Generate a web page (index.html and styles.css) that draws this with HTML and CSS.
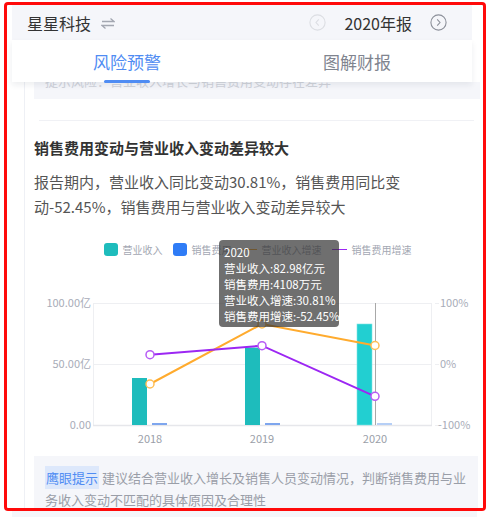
FILE: index.html
```html
<!DOCTYPE html>
<html lang="zh-CN">
<head>
<meta charset="utf-8">
<link rel="stylesheet" href="styles.css">
</head>
<body>
<div class="frame">
  <div class="header">
    <div class="company">
      <span class="name">星星科技</span>
      <svg class="swap" width="14" height="12" viewBox="0 0 14 12"><path d="M1 4.5h12L9.5 1.5M13 8.5H1l3.5 3" fill="none" stroke="#a3a7b1" stroke-width="1.3"/></svg>
    </div>
    <div class="period">
      <svg class="circ" width="17" height="17" viewBox="0 0 17 17"><circle cx="8.5" cy="8.5" r="7.6" fill="none" stroke="#dcdee3" stroke-width="1.1"/><path d="M9.8 5.4L7 8.5l2.8 3.1" fill="none" stroke="#dcdee3" stroke-width="1.1"/></svg>
      <span class="year">2020年报</span>
      <svg class="circ" width="17" height="17" viewBox="0 0 17 17"><circle cx="8.5" cy="8.5" r="7.6" fill="none" stroke="#8c909a" stroke-width="1.1"/><path d="M7.2 5.4L10 8.5l-2.8 3.1" fill="none" stroke="#8c909a" stroke-width="1.1"/></svg>
    </div>
  </div>
  <div class="tabs">
    <div class="tab active">风险预警<span class="bar"></span></div>
    <div class="tab">图解财报</div>
  </div>
  <div class="card">
    <div class="prev"><span>提示风险：营业收入增长与销售费用变动存在差异</span></div>
    <div class="divider"></div>
    <h2 class="title">销售费用变动与营业收入变动差异较大</h2>
    <p class="desc">报告期内，营业收入同比变动30.81%，销售费用同比变动-52.45%，销售费用与营业收入变动差异较大</p>
    <div class="legend">
      <span class="lg"><i class="sq teal"></i>营业收入</span>
      <span class="lg"><i class="sq blue"></i>销售费用</span>
      <span class="lg"><i class="ln orange"></i>营业收入增速</span>
      <span class="lg"><i class="ln purple"></i>销售费用增速</span>
    </div>
    <div class="chart">
      <svg width="445" height="160" viewBox="0 0 445 160" class="plot">
        <g stroke="#eeeff2" stroke-width="1">
          <line x1="59" y1="14.5" x2="398" y2="14.5"/>
          <line x1="59" y1="75.5" x2="398" y2="75.5"/>
          <line x1="59.5" y1="14" x2="59.5" y2="136"/>
          <line x1="397.5" y1="14" x2="397.5" y2="136"/>
          <line x1="401" y1="14.5" x2="405" y2="14.5"/>
          <line x1="401" y1="75.5" x2="405" y2="75.5"/>
          <line x1="401" y1="136.5" x2="405" y2="136.5"/>
        </g>
        <line x1="59" y1="136.5" x2="398" y2="136.5" stroke="#e6e7eb" stroke-width="1.5"/>
        <g class="yl" text-anchor="end">
          <text x="57" y="18">100.00亿</text>
          <text x="57" y="79">50.00亿</text>
          <text x="57" y="140">0.00</text>
        </g>
        <g class="yl">
          <text x="406" y="18">100%</text>
          <text x="406" y="79">0%</text>
          <text x="404" y="140">-100%</text>
        </g>
        <g class="xl" text-anchor="middle">
          <text x="116" y="154">2018</text>
          <text x="228" y="154">2019</text>
          <text x="341" y="154">2020</text>
        </g>
        <rect x="98" y="89" width="15" height="47" fill="#1ebcbc"/>
        <rect x="211" y="58.6" width="15" height="77.4" fill="#1ebcbc"/>
        <rect x="323" y="35" width="15" height="101" fill="#22cfd1" stroke="#7fe3e3" stroke-width="0.6"/>
        <rect x="118" y="134" width="15" height="2" fill="#7ea6ee"/>
        <rect x="231" y="134" width="15" height="2" fill="#7ea6ee"/>
        <rect x="343" y="134" width="15" height="2" fill="#b6cff6"/>
        <line x1="341.5" y1="14" x2="341.5" y2="136" stroke="#a8a8a8" stroke-width="1"/>
        <polyline points="116,95 228,35 341,56.5" fill="none" stroke="#ffab2e" stroke-width="2"/>
        <polyline points="116,65.7 228,56.7 341,107.3" fill="none" stroke="#9c27f3" stroke-width="2"/>
        <g fill="#fff" stroke="#ffbf55" stroke-width="1.5">
          <circle cx="116" cy="95" r="4"/>
          <circle cx="228" cy="35" r="4"/>
          <circle cx="341" cy="56.5" r="4"/>
        </g>
        <g fill="#fff" stroke="#b75cf5" stroke-width="1.5">
          <circle cx="116" cy="65.7" r="4"/>
          <circle cx="228" cy="56.7" r="4"/>
          <circle cx="341" cy="107.3" r="4"/>
        </g>
      </svg>
    </div>
    <div class="tip">
      <span class="tag">鹰眼提示</span> 建议结合营业收入增长及销售人员变动情况，判断销售费用与业务收入变动不匹配的具体原因及合理性
    </div>
    <div class="tooltip">
      <div>2020</div>
      <div>营业收入:82.98亿元</div>
      <div>销售费用:4108万元</div>
      <div>营业收入增速:30.81%</div>
      <div>销售费用增速:-52.45%</div>
    </div>
  </div>
</div>
<div class="below"></div>
</body>
</html>
```
FILE: styles.css
```css
* { box-sizing: border-box; }
html, body { margin: 0; padding: 0; background: #fff; }
body {
  font-family: "Noto Sans CJK SC", "Noto Sans", sans-serif;
  color: #333;
  width: 492px;
  height: 517px;
  overflow: hidden;
  padding-top: 2px;
}
.frame {
  margin-left: 4px;
  width: 482px;
  height: 509px;
  border: 3px solid #ff0a0a;
  border-radius: 4px;
  overflow: hidden;
  position: relative;
}
.header {
  margin-left: 5px;
  width: 460px;
  height: 35px;
  background: #f5f6fa;
  display: flex;
  align-items: center;
  justify-content: space-between;
  padding: 0 25px 0 15px;
}
.company { display: flex; align-items: center; gap: 10px; }
.name { font-size: 16px; color: #333; line-height: 20px; }
.swap { margin-top: 1px; }
.period { display: flex; align-items: center; gap: 18px; }
.year { font-size: 16px; color: #333; line-height: 20px; }
.tabs {
  margin-left: 5px;
  width: 460px;
  height: 42px;
  background: #fff;
  display: flex;
  position: relative;
  z-index: 2;
  box-shadow: 0 3px 6px rgba(30, 40, 70, 0.08);
}
.tab {
  flex: 1;
  display: flex;
  align-items: center;
  justify-content: center;
  font-size: 17px;
  color: #80848f;
  position: relative;
  padding-top: 1px;
}
.tab.active { color: #4f8cf3; }
.tab .bar {
  position: absolute;
  bottom: -1px;
  left: 50%;
  margin-left: -23px;
  width: 46px;
  height: 3px;
  background: #4f8cf3;
  border-radius: 2px;
}
.card {
  margin-left: 17px;
  width: 470px;
  height: 430px;
  background: #fff;
  border-left: 1px solid #eef0f5;
  padding-left: 9px;
  position: relative;
}
.prev {
  width: 446px;
  height: 17px;
  background: #f5f6fa;
  overflow: hidden;
  font-size: 13px;
  color: #d0d3da;
  line-height: 13px;
  padding-left: 11px;
}
.prev span { display: block; margin-top: -8px; }
.divider {
  margin: 21px 5px 0 5px;
  height: 1px;
  width: 435px;
  background: #f0f1f5;
}
.title {
  margin: 17px 0 0 0;
  font-size: 15px;
  font-weight: bold;
  line-height: 20px;
  color: #333;
}
.desc {
  margin: 11px 0 0 0;
  width: 445px;
  font-size: 15px;
  line-height: 25px;
  color: #555;
}
.legend {
  margin-top: 24px;
  width: 445px;
  height: 13px;
  display: flex;
  justify-content: center;
  align-items: center;
  gap: 10px;
  font-size: 10px;
  color: #a3a7b2;
  padding-left: 2px;
}
.lg { display: flex; align-items: center; gap: 5px; line-height: 13px; }
.sq { display: block; width: 14px; height: 13px; border-radius: 3px; }
.sq.teal { background: #1ebcbc; }
.sq.blue { background: #2f7cf6; }
.ln { display: block; width: 15px; height: 1.5px; }
.ln.orange { background: #ffab2e; }
.ln.purple { background: #9c27f3; }
.chart { margin-top: 33px; width: 445px; height: 160px; }
.plot { display: block; }
.yl text { font-size: 11px; fill: #a8acb8; }
.xl text { font-size: 11px; fill: #9a9ea8; }
.tip {
  margin-top: 7px;
  width: 444px;
  background: #f5f6fa;
  padding: 11px 12px 11px 11px;
  font-size: 13px;
  line-height: 22px;
  color: #9a9ea8;
}
.tag {
  background: #dde8fb;
  color: #4f8cf3;
  padding: 2px 1px;
}
.tooltip {
  position: absolute;
  left: 194px;
  top: 158px;
  width: 120px;
  height: 87px;
  background: rgba(50, 50, 50, 0.7);
  border-radius: 4px;
  color: #fff;
  font-size: 11.5px;
  line-height: 16px;
  padding: 4px 5px;
  white-space: nowrap;
  z-index: 3;
}
.below {
  margin-left: 12px;
  width: 465px;
  height: 6px;
  background: #f5f6fa;
}
```
